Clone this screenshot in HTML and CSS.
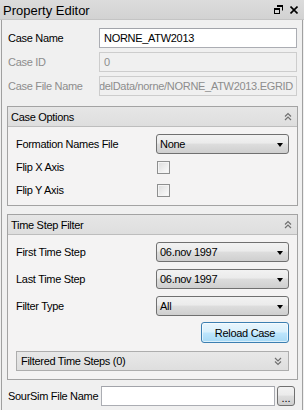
FILE: index.html
```html
<!DOCTYPE html>
<html>
<head>
<meta charset="utf-8">
<link rel="stylesheet" href="styles.css">
</head>
<body>
<div class="panel">
  <div class="titlebar">
    <span class="title">Property Editor</span>
    <span class="title-icons">
      <svg class="ico-float" width="9" height="9" viewBox="0 0 9 9">
        <path d="M3 0.5h5.5v5" fill="none" stroke="#000" stroke-width="1"/>
        <rect x="3" y="0" width="6" height="2" fill="#000"/>
        <rect x="0.5" y="3.5" width="5" height="5" fill="none" stroke="#000" stroke-width="1"/>
        <rect x="0" y="3" width="6" height="2" fill="#000"/>
      </svg>
      <svg class="ico-close" width="8" height="8" viewBox="0 0 8 8">
        <path d="M0.5 0.5L7.5 7.5M7.5 0.5L0.5 7.5" stroke="#000" stroke-width="1.6"/>
      </svg>
    </span>
  </div>
  <div class="main">
    <div class="row">
      <span class="label">Case Name</span>
      <div class="field">NORNE_ATW2013</div>
    </div>
    <div class="row">
      <span class="label dis">Case ID</span>
      <div class="field disabled">0</div>
    </div>
    <div class="row row3">
      <span class="label dis">Case File Name</span>
      <div class="field disabled endclip"><span>/ModelData/norne/NORNE_ATW2013.EGRID</span></div>
    </div>

    <div class="group g1">
      <div class="ghead">
        <span>Case Options</span>
        <svg class="chev" width="8" height="9" viewBox="0 0 8 9"><path d="M1 4.5L4 1.5L7 4.5M1 8L4 5L7 8" fill="none" stroke="#707070" stroke-width="1.2"/></svg>
      </div>
      <div class="gbody">
        <div class="grow">
          <span class="glabel">Formation Names File</span>
          <div class="combo"><span>None</span><span class="arrow"></span></div>
        </div>
        <div class="grow">
          <span class="glabel">Flip X Axis</span>
          <span class="check"></span>
        </div>
        <div class="grow">
          <span class="glabel">Flip Y Axis</span>
          <span class="check"></span>
        </div>
      </div>
    </div>

    <div class="group g2">
      <div class="ghead">
        <span>Time Step Filter</span>
        <svg class="chev" width="8" height="9" viewBox="0 0 8 9"><path d="M1 4.5L4 1.5L7 4.5M1 8L4 5L7 8" fill="none" stroke="#707070" stroke-width="1.2"/></svg>
      </div>
      <div class="gbody gb2">
        <div class="grow">
          <span class="glabel">First Time Step</span>
          <div class="combo"><span>06.nov 1997</span><span class="arrow"></span></div>
        </div>
        <div class="grow">
          <span class="glabel">Last Time Step</span>
          <div class="combo"><span>06.nov 1997</span><span class="arrow"></span></div>
        </div>
        <div class="grow">
          <span class="glabel">Filter Type</span>
          <div class="combo"><span>All</span><span class="arrow"></span></div>
        </div>
        <div class="btnrow">
          <button class="reload">Reload Case</button>
        </div>
        <div class="subgroup">
          <span>Filtered Time Steps (0)</span>
          <svg class="chev" width="8" height="9" viewBox="0 0 8 9"><path d="M1 1L4 4L7 1M1 4.5L4 7.5L7 4.5" fill="none" stroke="#707070" stroke-width="1.2"/></svg>
        </div>
      </div>
    </div>

    <div class="row row-last">
      <span class="label">SourSim File Name</span>
      <div class="field short"></div>
      <button class="dots">...</button>
    </div>
  </div>
</div>
</body>
</html>
```

FILE: styles.css
```css
* { box-sizing: border-box; }
html, body { margin: 0; padding: 0; }
body {
  font-family: "Liberation Sans", Arial, sans-serif;
  font-size: 11px;
  letter-spacing: -0.3px;
  color: #000;
  background: #f0f0f0;
}
.panel {
  width: 304px;
  height: 410px;
  display: flex;
  flex-direction: column;
  background: #f0f0f0;
  overflow: hidden;
}
.titlebar {
  height: 20px;
  flex: none;
  display: flex;
  align-items: center;
  justify-content: space-between;
  padding: 0 6px 0 3px;
  background: linear-gradient(#dcdcdc, #d2d2d2);
  border-bottom: 1px solid #c4c4c4;
  font-size: 13px;
  letter-spacing: 0;
}
.title { padding-top: 1px; }
.title-icons {
  display: flex;
  align-items: center;
  gap: 7px;
}
.ico-float { display: block; }
.ico-close { display: block; }
.main {
  flex: 1;
  border-left: 1px solid #a0a0a0;
  border-right: 1px solid #a0a0a0;
  margin: 0 1px;
  padding: 8px 5px 0 5px;
}
.row {
  display: flex;
  align-items: center;
  height: 20px;
  margin-bottom: 4px;
}
.row3 { margin-top: 1px; margin-bottom: 0; }
.label {
  width: 92px;
  flex: none;
  padding-left: 1px;
}
.label.dis { color: #8d8d8d; }
.field {
  width: 198px;
  height: 20px;
  border: 1px solid #abadb3;
  border-top-color: #a2a4aa;
  background: #fff;
  display: flex;
  align-items: center;
  padding: 0 4px;
  white-space: nowrap;
  overflow: hidden;
}
.field.disabled {
  background: #f0f0f0;
  border-color: #cdcdcd;
  color: #8d8d8d;
}
.field.endclip { justify-content: flex-end; padding-right: 3px; }
.field.endclip span { flex: none; }
.field.short { width: 174px; }

.group {
  width: 291px;
  border: 1px solid #a3a3a3;
  background: #f4f3f3;
}
.g1 { margin-top: 10px; }
.g2 { margin-top: 8px; }
.ghead {
  height: 20px;
  display: flex;
  align-items: center;
  justify-content: space-between;
  padding: 0 5px 0 3px;
  background: linear-gradient(#e6e6e6, #dedede);
  border-bottom: 1px solid #bdbdbd;
}
.chev { display: block; }
.gbody {
  padding: 7px 8px 5px 8px;
}
.grow {
  display: flex;
  align-items: center;
  min-height: 20px;
  margin-bottom: 3px;
}
.gb2 .grow { margin-bottom: 7px; }
.gb2 .grow:nth-child(3) { margin-bottom: 6px; }
.gbody > .grow:last-child { margin-bottom: 0; }
.glabel {
  width: 140px;
  flex: none;
}
.combo {
  width: 133px;
  height: 20px;
  border: 1px solid #707070;
  border-radius: 3px;
  background: linear-gradient(#f2f2f2 0%, #ebebeb 45%, #dddddd 50%, #cfcfcf 100%);
  display: flex;
  align-items: center;
  justify-content: space-between;
  padding: 0 5px 0 3px;
}
.arrow {
  width: 0;
  height: 0;
  border-left: 3.5px solid transparent;
  border-right: 3.5px solid transparent;
  border-top: 4px solid #000;
  margin-top: 1px;
}
.check {
  width: 13px;
  height: 13px;
  margin-left: 1px;
  border: 1px solid #8e8f8f;
  background: linear-gradient(135deg, #dcdcdc, #fdfdfd);
  box-shadow: inset 0 0 0 1px #f4f4f4;
}
.btnrow {
  display: flex;
  justify-content: flex-end;
  margin-bottom: 8px;
}
.reload {
  width: 88px;
  height: 21px;
  border: 1px solid #3c7fb1;
  border-radius: 3px;
  background: linear-gradient(#eaf6fd 0%, #d9f0fc 48%, #bee6fd 52%, #a7d9f5 100%);
  font-family: "Liberation Sans", Arial, sans-serif;
  font-size: 11px;
  letter-spacing: -0.3px;
  color: #000;
  padding: 0;
  box-shadow: inset 0 0 0 1px rgba(255,255,255,0.6);
}
.subgroup {
  height: 20px;
  border: 1px solid #adadad;
  background: linear-gradient(#e8e8e8, #dedede);
  display: flex;
  align-items: center;
  justify-content: space-between;
  padding: 0 6px 0 4px;
}
.gb2 { padding-bottom: 8px; }
.row-last {
  margin-top: 6px;
}
.row-last .label { width: 94px; }
.dots {
  width: 18px;
  height: 20px;
  margin-left: 2px;
  border: 1px solid #707070;
  border-radius: 3px;
  background: linear-gradient(#f2f2f2 0%, #ebebeb 45%, #dddddd 50%, #cfcfcf 100%);
  font-family: "Liberation Sans", Arial, sans-serif;
  font-size: 11px;
  padding: 4px 0 0 0;
  letter-spacing: 0;
  line-height: 1;
}
```
